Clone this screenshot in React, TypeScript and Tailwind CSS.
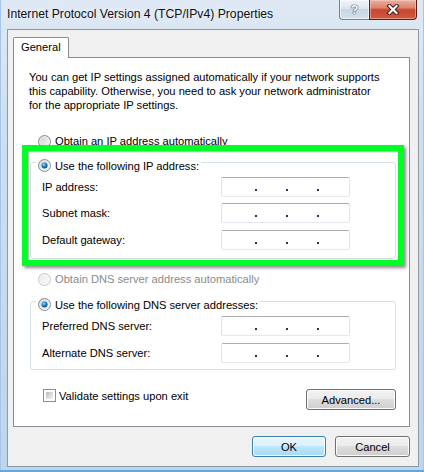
import React from "react";

const Radio = ({ checked = false, disabled = false }: { checked?: boolean; disabled?: boolean }) => (
  <svg width="13" height="13" viewBox="0 0 13 13" className="shrink-0">
    <defs>
      <linearGradient id="rfill" x1="0" y1="0" x2="1" y2="1">
        <stop offset="0" stopColor="#c9c9c9" />
        <stop offset="1" stopColor="#ffffff" />
      </linearGradient>
      <linearGradient id="rfilld" x1="0" y1="0" x2="1" y2="1">
        <stop offset="0" stopColor="#e6e6e6" />
        <stop offset="1" stopColor="#ffffff" />
      </linearGradient>
      <radialGradient id="rdot" cx="0.4" cy="0.35" r="0.75">
        <stop offset="0" stopColor="#9fe0ff" />
        <stop offset="0.45" stopColor="#1c86cc" />
        <stop offset="1" stopColor="#0b3f74" />
      </radialGradient>
    </defs>
    <circle cx="6.5" cy="6.5" r="6" fill={disabled ? "url(#rfilld)" : "url(#rfill)"} stroke={disabled ? "#c8c8c8" : "#8a8a8a"} />
    <circle cx="6.5" cy="6.5" r="4.6" fill="none" stroke={disabled ? "#f6f6f6" : "#f2f2f2"} strokeWidth="0.8" />
    {checked && <circle cx="6.5" cy="6.5" r="3" fill="url(#rdot)" />}
  </svg>
);

const Checkbox = () => (
  <div className="w-[13px] h-[13px] border border-[#8e8f8f] bg-white p-[2px] shrink-0">
    <div className="w-full h-full bg-[linear-gradient(135deg,#b9bcc2_0%,#dfe0e2_60%,#f4f4f4_100%)]" />
  </div>
);

const IpBox = () => (
  <div className="w-[129px] h-[20px] bg-white border border-[#e2e3ea] border-t-[#abadb3] border-b-[#e3e9ef] rounded-[2px] flex items-end pb-[5px] pl-[33px] gap-[29px]">
    <span className="w-[2px] h-[2px] bg-[#2a3160]" />
    <span className="w-[2px] h-[2px] bg-[#2a3160]" />
    <span className="w-[2px] h-[2px] bg-[#2a3160]" />
  </div>
);

const Row = ({ label, first = false }: { label: string; first?: boolean }) => (
  <div className={first ? "flex items-center h-[20px]" : "flex items-center h-[20px] mt-[7px]"}>
    <span className="w-[179px] text-[11.15px] leading-[14px] whitespace-nowrap">{label}</span>
    <IpBox />
  </div>
);

export default function App() {
  return (
    <div className="w-[424px] h-[472px] flex flex-col overflow-hidden bg-[linear-gradient(to_bottom,#dfe9f5_0%,#cfdfef_25%,#bed5ec_100%)] shadow-[inset_0_-2px_0_#62a8df,inset_1px_0_0_#a7c5e6,inset_-1px_0_0_#a7c5e6] [font-family:'Liberation_Sans',Arial,sans-serif] text-black">
      {/* title bar */}
      <div className="h-[29px] shrink-0 flex items-start justify-between pl-[7px] pr-[7px]">
        <span className="mt-[7px] text-[12.2px] leading-[14px] whitespace-nowrap text-[#111] [text-shadow:0_0_6px_rgba(255,255,255,0.9)]">
          Internet Protocol Version 4 (TCP/IPv4) Properties
        </span>
        <div className="flex">
          <div className="w-[30px] h-[20px] rounded-bl-[4px] border border-t-0 border-r-0 border-[#72839a] bg-[linear-gradient(to_bottom,#eef3f9_0%,#dde6f0_45%,#c7d5e5_50%,#d3dfec_100%)] shadow-[inset_0_0_0_1px_rgba(255,255,255,0.6)] flex items-center justify-center text-[13px] leading-[14px] font-bold text-white [text-shadow:0_0_1px_#3b4656,0_0_1px_#3b4656,0_0_1px_#3b4656]">
            ?
          </div>
          <div className="w-[48px] h-[20px] rounded-br-[4px] border border-t-0 border-[#5a2016] bg-[linear-gradient(to_bottom,#eab0a2_0%,#dc8570_40%,#c8472f_52%,#cf5a3f_100%)] shadow-[inset_0_0_0_1px_rgba(255,220,210,0.45)] flex items-center justify-center">
            <svg width="14" height="11" viewBox="0 0 14 11">
              <path d="M3.5 2 L10.5 9 M10.5 2 L3.5 9" stroke="#4a1a12" strokeWidth="4.2" strokeLinecap="square" fill="none" />
              <path d="M3.5 2 L10.5 9 M10.5 2 L3.5 9" stroke="#ffffff" strokeWidth="2.2" strokeLinecap="square" fill="none" />
            </svg>
          </div>
        </div>
      </div>

      {/* client area */}
      <div className="flex-1 ml-[7px] mr-[5px] mb-[5px] border border-[#8d99a6] bg-[#f0f0f0] flex flex-col">
        <div className="relative z-10 ml-[5px] mt-[7px] -mb-[1px] w-[56px] h-[21px] bg-white border border-b-0 border-[#898c95] rounded-t-[2px] pl-[7px] text-[11.15px] leading-[19px]">
          General
        </div>
        <div className="relative ml-[5px] w-[397px] h-[370px] bg-white border border-[#898c95] flex flex-col">
          <p className="mt-[12px] ml-[15px] text-[11.15px] leading-[14px] whitespace-nowrap">
            You can get IP settings assigned automatically if your network supports
            <br />
            this capability. Otherwise, you need to ask your network administrator
            <br />
            for the appropriate IP settings.
          </p>

          <div className="mt-[22px] ml-[24px] h-[14px] flex items-center gap-[4px] text-[11.15px] leading-[14px]">
            <Radio />
            <span>Obtain an IP address automatically</span>
          </div>

          <fieldset className="mt-[7px] ml-[16px] mr-[13px] border border-[#d5dfe5] rounded-[3px] pb-[8px]">
            <legend className="ml-[5px] px-[2px] h-[14px]">
              <span className="inline-flex items-center gap-[4px] h-[14px] text-[11.15px] leading-[14px]">
                <Radio checked />
                <span>Use the following IP address:</span>
              </span>
            </legend>
            <div className="pl-[11px] pt-[8px] flex flex-col">
              <Row label="IP address:" first />
              <div className="flex items-center h-[20px] mt-[6px]">
                <span className="w-[179px] text-[11.15px] leading-[14px] whitespace-nowrap">Subnet mask:</span>
                <IpBox />
              </div>
              <Row label="Default gateway:" />
            </div>
          </fieldset>

          <div className="mt-[13px] ml-[24px] h-[14px] flex items-center gap-[4px] text-[11.15px] leading-[14px] text-[#8b8b8b]">
            <Radio disabled />
            <span>Obtain DNS server address automatically</span>
          </div>

          <fieldset className="mt-[8px] ml-[16px] mr-[13px] border border-[#d5dfe5] rounded-[3px] pb-[6px]">
            <legend className="ml-[5px] px-[2px] h-[14px]">
              <span className="inline-flex items-center gap-[4px] h-[14px] text-[11.15px] leading-[14px]">
                <Radio checked />
                <span>Use the following DNS server addresses:</span>
              </span>
            </legend>
            <div className="pl-[11px] pt-[8px] flex flex-col">
              <Row label="Preferred DNS server:" first />
              <Row label="Alternate DNS server:" />
            </div>
          </fieldset>

          <div className="mt-[19px] flex items-start justify-between">
            <div className="ml-[29px] h-[13px] flex items-center gap-[3px] text-[11.15px] leading-[14px]">
              <Checkbox />
              <span className="whitespace-nowrap">Validate settings upon exit</span>
            </div>
            <button className="mr-[13px] w-[90px] h-[21px] rounded-[3px] border border-[#707070] bg-[linear-gradient(to_bottom,#f2f2f2_0%,#ebebeb_50%,#dddddd_50%,#cfcfcf_100%)] shadow-[inset_0_0_0_1px_#fcfcfc] text-[11.15px] leading-[14px] text-black">
              Advanced...
            </button>
          </div>

          <div className="absolute left-[8px] top-[87px] w-[382px] h-[121px] border-[6px] border-[#00ff26] shadow-[2px_2px_3px_rgba(0,0,0,0.45),inset_1px_1px_2px_rgba(0,0,0,0.35)] pointer-events-none" />
        </div>

        <div className="mt-[9px] pr-[8px] flex justify-end gap-[9px]">
          <button className="w-[74px] h-[21px] rounded-[3px] border border-[#3c7fb1] bg-[linear-gradient(to_bottom,#eaf6fd_0%,#d9f0fc_50%,#bee6fd_50%,#a7d9f5_100%)] shadow-[inset_0_0_0_1px_#f6fbfe] text-[11.15px] leading-[14px] text-black">
            OK
          </button>
          <button className="w-[75px] h-[21px] rounded-[3px] border border-[#707070] bg-[linear-gradient(to_bottom,#f2f2f2_0%,#ebebeb_50%,#dddddd_50%,#cfcfcf_100%)] shadow-[inset_0_0_0_1px_#fcfcfc] text-[11.15px] leading-[14px] text-black">
            Cancel
          </button>
        </div>
      </div>
    </div>
  );
}
